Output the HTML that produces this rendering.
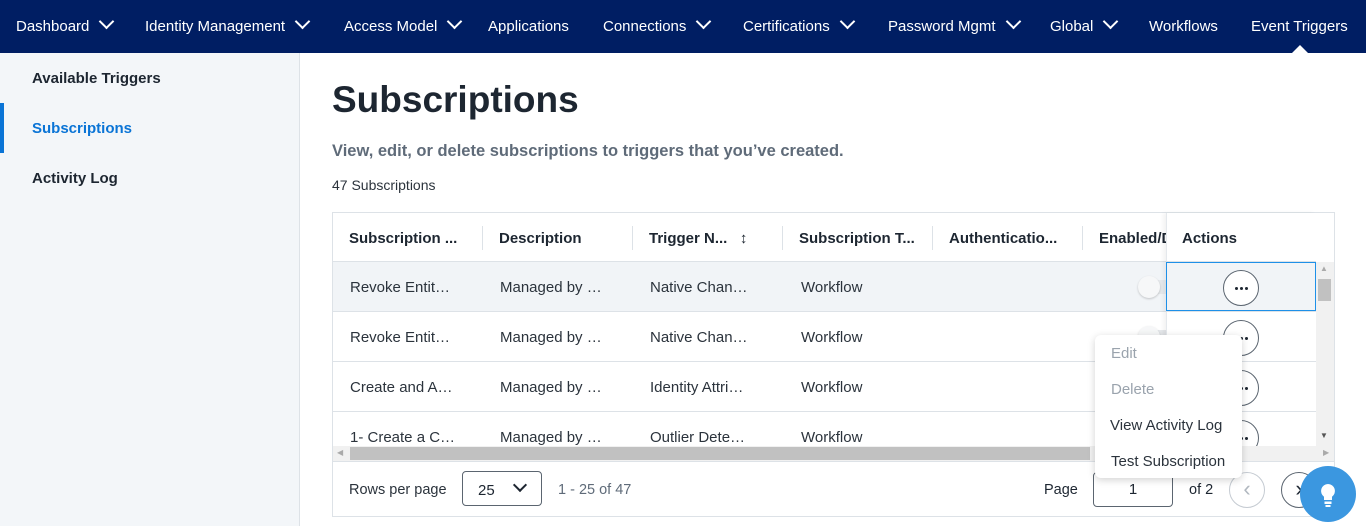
<!DOCTYPE html>
<html><head><meta charset="utf-8"><style>
*{box-sizing:border-box;margin:0;padding:0}
body{width:1366px;height:526px;overflow:hidden;font-family:"Liberation Sans",sans-serif;background:#fff;position:relative;color:#1d2631}
.nav{position:absolute;left:0;top:0;width:1366px;height:53px;background:#001e63;color:#fff;font-size:15px}
.nav span{position:absolute;top:18px;white-space:nowrap}
.chev{display:inline-block;width:11px;height:11px;border-right:2px solid #fff;border-bottom:2px solid #fff;transform:rotate(45deg);margin-left:12px;position:relative;top:-4px}
.side{position:absolute;left:0;top:53px;width:300px;height:473px;background:#f3f6f9;border-right:1px solid #dde2e7}
.side div{position:absolute;left:32px;font-weight:bold;font-size:15px;color:#1d2631}
.abs{position:absolute;white-space:nowrap}
.tbl{position:absolute;left:332px;top:212px;width:1003px;height:305px;border:1px solid #dde2e7}
.hd{font-weight:bold;font-size:15px}
.cell{font-size:15px;color:#2b333c}
.sep{position:absolute;width:1px;height:24px;background:#dde2e7;top:226px}
.hl{position:absolute;height:1px;background:#dde2e7;left:333px;width:983px}
.dots{position:absolute;width:36px;height:36px;border:1px solid #5b6570;border-radius:50%;background:#fff}
.dots::after{content:"";position:absolute;left:11px;top:16px;width:3px;height:3px;border-radius:50%;background:#1d2631;box-shadow:5px 0 #1d2631,10px 0 #1d2631}
.tog{position:absolute;width:22px;height:22px;border-radius:50%;background:#f6f7f8;box-shadow:0 1px 2px rgba(0,0,0,.2)}
.trk{position:absolute;width:36px;height:14px;border-radius:7px;background:#e6e9ec}
</style></head><body>
<div class="nav">
<span style="left:16px">Dashboard<i class="chev"></i></span>
<span style="left:145px">Identity Management<i class="chev"></i></span>
<span style="left:344px">Access Model<i class="chev"></i></span>
<span style="left:488px">Applications</span>
<span style="left:603px">Connections<i class="chev"></i></span>
<span style="left:743px">Certifications<i class="chev"></i></span>
<span style="left:888px">Password Mgmt<i class="chev"></i></span>
<span style="left:1050px">Global<i class="chev"></i></span>
<span style="left:1149px">Workflows</span>
<span style="left:1251px">Event Triggers</span>
</div>
<div style="position:absolute;left:1292px;top:45px;width:0;height:0;border-left:8px solid transparent;border-right:8px solid transparent;border-bottom:8px solid #fff"></div>
<div class="side">
<div style="top:17px">Available Triggers</div>
<div style="top:67px;color:#0a74d6">Subscriptions</div>
<div style="top:117px">Activity Log</div>
<i style="position:absolute;left:0;top:50px;width:4px;height:50px;background:#0a74d6"></i>
</div>
<div class="abs" style="left:332px;top:79px;font-size:37px;font-weight:bold;color:#1d2631">Subscriptions</div>
<div class="abs" style="left:332px;top:142px;font-size:16.5px;font-weight:bold;color:#5f6b79">View, edit, or delete subscriptions to triggers that you’ve created.</div>
<div class="abs" style="left:332px;top:177px;font-size:14px;color:#2b333c">47 Subscriptions</div>
<div class="tbl"></div>
<div style="position:absolute;left:333px;top:262px;width:983px;height:49px;background:#f1f4f7"></div>
<div class="hl" style="top:261px"></div><div class="hl" style="top:311px"></div><div class="hl" style="top:361px"></div><div class="hl" style="top:411px"></div>
<div class="abs hd" style="left:349px;top:230px">Subscription ...</div>
<div class="sep" style="left:482px"></div>
<div class="abs hd" style="left:499px;top:230px">Description</div>
<div class="sep" style="left:632px"></div>
<div class="abs hd" style="left:649px;top:230px">Trigger N...&nbsp;&nbsp;&nbsp;↕</div>
<div class="sep" style="left:782px"></div>
<div class="abs hd" style="left:799px;top:230px">Subscription T...</div>
<div class="sep" style="left:932px"></div>
<div class="abs hd" style="left:949px;top:230px">Authenticatio...</div>
<div class="sep" style="left:1082px"></div>
<div class="abs hd" style="left:1099px;top:230px;width:67px;overflow:hidden">Enabled/Disabled</div>
<div class="abs cell" style="left:350px;top:279px">Revoke Entit…</div><div class="abs cell" style="left:500px;top:279px">Managed by …</div><div class="abs cell" style="left:650px;top:279px">Native Chan…</div><div class="abs cell" style="left:801px;top:279px">Workflow</div>
<div class="abs cell" style="left:350px;top:329px">Revoke Entit…</div><div class="abs cell" style="left:500px;top:329px">Managed by …</div><div class="abs cell" style="left:650px;top:329px">Native Chan…</div><div class="abs cell" style="left:801px;top:329px">Workflow</div>
<div class="abs cell" style="left:350px;top:379px">Create and A…</div><div class="abs cell" style="left:500px;top:379px">Managed by …</div><div class="abs cell" style="left:650px;top:379px">Identity Attri…</div><div class="abs cell" style="left:801px;top:379px">Workflow</div>
<div class="abs cell" style="left:350px;top:429px">1- Create a C…</div><div class="abs cell" style="left:500px;top:429px">Managed by …</div><div class="abs cell" style="left:650px;top:429px">Outlier Dete…</div><div class="abs cell" style="left:801px;top:429px">Workflow</div>
<div class="trk" style="left:1138px;top:280px"></div><div class="tog" style="left:1138px;top:276px"></div>
<div class="trk" style="left:1138px;top:330px"></div><div class="tog" style="left:1138px;top:326px"></div>
<div style="position:absolute;left:1166px;top:213px;width:150px;height:233px;background:#fff;border-left:1px solid #e4e8ec;box-shadow:-3px 0 4px rgba(0,0,0,.05)"></div>
<div class="hl" style="top:261px;left:1166px;width:150px"></div><div class="hl" style="top:311px;left:1166px;width:150px"></div><div class="hl" style="top:361px;left:1166px;width:150px"></div><div class="hl" style="top:411px;left:1166px;width:150px"></div>
<div class="abs hd" style="left:1182px;top:230px">Actions</div>
<div style="position:absolute;left:1166px;top:262px;width:150px;height:49px;border:1px solid #1e90e8;background:#f1f4f7"></div>
<div class="dots" style="left:1223px;top:270px"></div>
<div class="dots" style="left:1223px;top:320px"></div>
<div class="dots" style="left:1223px;top:370px"></div>
<div class="dots" style="left:1223px;top:420px"></div>
<div style="position:absolute;left:1316px;top:262px;width:18px;height:184px;background:#f1f1f1"></div>
<div style="position:absolute;left:1318px;top:279px;width:13px;height:22px;background:#c1c1c1"></div>
<div class="abs" style="left:1320px;top:264px;font-size:8px;color:#aaa">▲</div>
<div class="abs" style="left:1320px;top:431px;font-size:8px;color:#555">▼</div>
<div style="position:absolute;left:333px;top:446px;width:1001px;height:16px;background:#f1f1f1;border-bottom:1px solid #dde2e7"></div>
<div style="position:absolute;left:350px;top:447px;width:740px;height:13px;background:#c1c1c1"></div>
<div class="abs" style="left:337px;top:448px;font-size:8px;color:#aaa">◀</div>
<div class="abs" style="left:1323px;top:448px;font-size:8px;color:#aaa">▶</div>
<div class="abs" style="left:349px;top:482px;font-size:14.5px;color:#2b333c">Rows per page</div>
<div style="position:absolute;left:462px;top:471px;width:80px;height:35px;border:1px solid #5b6570;border-radius:4px"></div>
<div class="abs" style="left:478px;top:482px;font-size:15px">25</div>
<i style="position:absolute;left:515px;top:480px;width:10px;height:10px;border-right:2px solid #1d2631;border-bottom:2px solid #1d2631;transform:rotate(45deg)"></i>
<div class="abs" style="left:558px;top:482px;font-size:14.5px;color:#5f6b79">1 - 25 of 47</div>
<div class="abs" style="left:1044px;top:482px;font-size:14.5px">Page</div>
<div style="position:absolute;left:1093px;top:472px;width:80px;height:35px;border:1px solid #5b6570;border-radius:4px;text-align:center;font-size:15px;line-height:34px">1</div>
<div class="abs" style="left:1189px;top:482px;font-size:14.5px">of 2</div>
<div style="position:absolute;left:1229px;top:472px;width:36px;height:36px;border:1px solid #c5cbd2;border-radius:50%;color:#b0b7bf;text-align:center;font-size:22px;line-height:32px">‹</div>
<div style="position:absolute;left:1281px;top:472px;width:36px;height:36px;border:1px solid #5b6570;border-radius:50%;text-align:center;font-size:22px;line-height:32px">›</div>
<div style="position:absolute;left:1095px;top:335px;width:147px;height:143px;background:#fff;border-radius:6px;box-shadow:0 2px 8px rgba(0,0,0,.18)">
<div class="abs" style="left:16px;top:10px;font-size:15px;color:#9aa3ad">Edit</div>
<div class="abs" style="left:16px;top:46px;font-size:15px;color:#9aa3ad">Delete</div>
<div class="abs" style="left:15px;top:82px;font-size:15px;color:#2b333c">View Activity Log</div>
<div class="abs" style="left:16px;top:118px;font-size:15px;color:#2b333c">Test Subscription</div>
</div>
<div style="position:absolute;left:1300px;top:466px;width:56px;height:56px;border-radius:50%;background:#3b97e0">
<svg width="56" height="56" viewBox="0 0 56 56"><path d="M28 18a7 7 0 0 0-4 12.7V34h8v-3.3A7 7 0 0 0 28 18z" fill="#fff"/><rect x="24.5" y="35.5" width="7" height="2.5" fill="#fff"/><rect x="25.5" y="39" width="5" height="2" fill="#fff"/></svg>
</div>
</body></html>
